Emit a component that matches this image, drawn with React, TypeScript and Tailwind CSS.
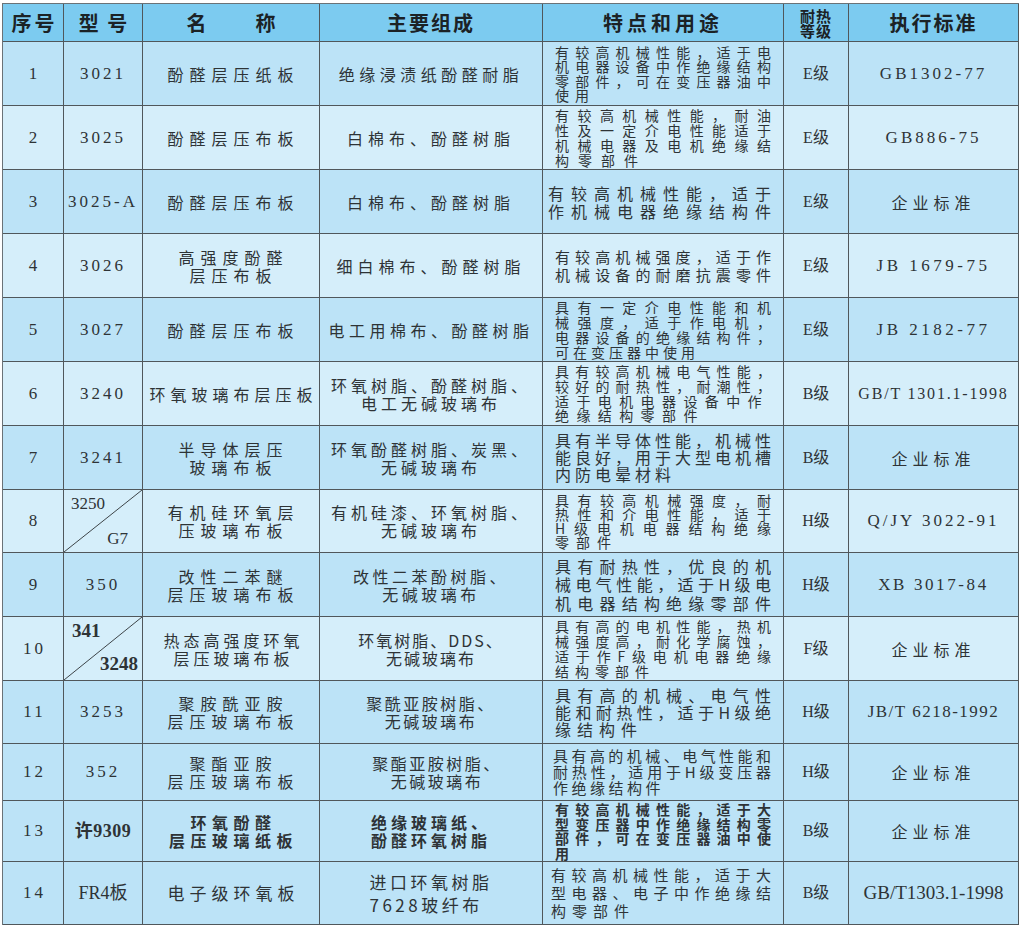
import type { ReactNode } from "react";

const GRID = "grid grid-cols-[61px_79px_177px_223px_241px_65px_170px]";
const EDGE = "border-r border-b border-[#50575b]";
const SERIF = "font-['Liberation_Serif','Noto_Sans_CJK_SC',serif]";
const DARK = "bg-[#bce3f7]";
const LIGHT = "bg-[#d5eefa]";

type Row = {
  no: string;
  h: string;
  bg: string;
  model: string | { a: string; b: string; bold?: boolean };
  modelCls?: string;
  name: string[];
  nameCls?: string;
  comp: string[];
  compCls?: string;
  feat: string[];
  full: number; // first n lines are justified to the cell width
  featCls: string;
  restCls?: string;
  grade: string;
  std: string;
  stdCls: string;
};

const ROWS: Row[] = [
  {
    no: "1", h: "h-[64px]", bg: DARK, model: "3021",
    name: ["酚醛层压纸板"], comp: ["绝缘浸渍纸酚醛耐脂"], compCls: "tracking-[4.5px]",
    feat: ["有较高机械性能，适于电", "机电器设备中作绝缘结构", "零部件，可在变压器油中", "使用"],
    full: 3, featCls: "text-[14px] leading-[14.5px]", restCls: "tracking-[6px]",
    grade: "E级", std: "GB1302-77", stdCls: `${SERIF} text-[17px] tracking-[3px]`,
  },
  {
    no: "2", h: "h-[64px]", bg: LIGHT, model: "3025",
    name: ["酚醛层压布板"], comp: ["白棉布、酚醛树脂"],
    feat: ["有较高机械性能，耐油", "性及一定介电性能适于", "机械电器及电机绝缘结", "构零部件"],
    full: 3, featCls: "text-[14px] leading-[15px]", restCls: "tracking-[9px]",
    grade: "E级", std: "GB886-75", stdCls: `${SERIF} text-[17px] tracking-[3px]`,
  },
  {
    no: "3", h: "h-[64px]", bg: DARK, model: "3025-A",
    name: ["酚醛层压布板"], comp: ["白棉布、酚醛树脂"],
    feat: ["有较高机械性能，适于", "作机械电器绝缘结构件"],
    full: 2, featCls: "text-[16px] leading-[18px] pl-[5px]",
    grade: "E级", std: "企业标准", stdCls: "text-[16px] tracking-[5px]",
  },
  {
    no: "4", h: "h-[64px]", bg: LIGHT, model: "3026",
    name: ["高强度酚醛", "层压布板"], comp: ["细白棉布、酚醛树脂"],
    feat: ["有较高机械强度，适于作", "机械设备的耐磨抗震零件"],
    full: 2, featCls: "text-[15px] leading-[18px]",
    grade: "E级", std: "JB 1679-75", stdCls: `${SERIF} text-[17px] tracking-[3.5px]`,
  },
  {
    no: "5", h: "h-[64px]", bg: DARK, model: "3027",
    name: ["酚醛层压布板"], comp: ["电工用棉布、酚醛树脂"], compCls: "tracking-[4.5px]",
    feat: ["具有一定介电性能和机", "械强度，适于作电机，", "电器设备的绝缘结构件，", "可在变压器中使用"],
    full: 3, featCls: "text-[14px] leading-[15px]", restCls: "tracking-[4px]",
    grade: "E级", std: "JB 2182-77", stdCls: `${SERIF} text-[17px] tracking-[3.5px]`,
  },
  {
    no: "6", h: "h-[64px]", bg: LIGHT, model: "3240",
    name: ["环氧玻璃布层压板"], nameCls: "tracking-[5px]",
    comp: ["环氧树脂、酚醛树脂、", "电工无碱玻璃布"], compCls: "tracking-[4px]",
    feat: ["具有较高机械电气性能，", "较好的耐热性，耐潮性，", "适于电机电器设备中作", "绝缘结构零部件"],
    full: 2, featCls: "text-[14px] leading-[14.7px]", restCls: "tracking-[7.4px]",
    grade: "B级", std: "GB/T 1301.1-1998", stdCls: `${SERIF} text-[16px] tracking-[1.8px]`,
  },
  {
    no: "7", h: "h-[64px]", bg: DARK, model: "3241",
    name: ["半导体层压", "玻璃布板"], comp: ["环氧酚醛树脂、炭黑、", "无碱玻璃布"], compCls: "tracking-[4px]",
    feat: ["具有半导体性能，机械性", "能良好，用于大型电机槽", "内防电晕材料"],
    full: 2, featCls: "text-[16px] leading-[17px]", restCls: "tracking-[4px]",
    grade: "B级", std: "企业标准", stdCls: "text-[16px] tracking-[5px]",
  },
  {
    no: "8", h: "h-[63px]", bg: LIGHT, model: { a: "3250", b: "G7" },
    name: ["有机硅环氧层", "压玻璃布板"], comp: ["有机硅漆、环氧树脂、", "无碱玻璃布"], compCls: "tracking-[4px]",
    feat: ["具有较高机械强度，耐", "热性和介电性能，适于", "H级电机电器结构绝缘", "零部件"],
    full: 3, featCls: "text-[14px] leading-[14px]", restCls: "tracking-[7px]",
    grade: "H级", std: "Q/JY 3022-91", stdCls: `${SERIF} text-[17px] tracking-[3px]`,
  },
  {
    no: "9", h: "h-[64px]", bg: DARK, model: "350",
    name: ["改性二苯醚", "层压玻璃布板"], comp: ["改性二苯酚树脂、", "无碱玻璃布"], compCls: "tracking-[3.5px]",
    feat: ["具有耐热性，优良的机", "械电气性能，适于H级电", "机电器结构绝缘零部件"],
    full: 3, featCls: "text-[16px] leading-[18.5px]",
    grade: "H级", std: "XB 3017-84", stdCls: `${SERIF} text-[17px] tracking-[2.6px]`,
  },
  {
    no: "10", h: "h-[64px]", bg: LIGHT, model: { a: "341", b: "3248", bold: true },
    name: ["热态高强度环氧", "层压玻璃布板"], nameCls: "tracking-[4px]",
    comp: ["环氧树脂、DDS、", "无碱玻璃布"], compCls: "text-[15px] tracking-[2px]",
    feat: ["具有高的电机性能，热机", "械强度高，耐化学腐蚀，", "适于作F级电机电器绝缘", "结构零部件"],
    full: 3, featCls: "text-[14px] leading-[15px]", restCls: "tracking-[6px]",
    grade: "F级", std: "企业标准", stdCls: "text-[16px] tracking-[5px]",
  },
  {
    no: "11", h: "h-[63px]", bg: DARK, model: "3253",
    name: ["聚胺酰亚胺", "层压玻璃布板"], comp: ["聚酰亚胺树脂、", "无碱玻璃布"], compCls: "text-[15px] tracking-[2.5px]",
    feat: ["具有高的机械、电气性", "能和耐热性，适于H级绝", "缘结构件"],
    full: 2, featCls: "text-[16px] leading-[17px]", restCls: "tracking-[6px]",
    grade: "H级", std: "JB/T 6218-1992", stdCls: `${SERIF} text-[17px] tracking-[1.5px]`,
  },
  {
    no: "12", h: "h-[57px]", bg: DARK, model: "352",
    name: ["聚酯亚胺", "层压玻璃布板"], comp: ["聚酯亚胺树脂、", "无碱玻璃布"], compCls: "text-[15px] tracking-[2.5px] pl-[12px]",
    feat: ["具有高的机械、电气性能和", "耐热性，适用于H级变压器", "作绝缘结构件"],
    full: 2, featCls: "text-[15px] leading-[16px] pl-[10px]", restCls: "tracking-[3.5px]",
    grade: "H级", std: "企业标准", stdCls: "text-[16px] tracking-[5px]",
  },
  {
    no: "13", h: "h-[61px]", bg: DARK, model: "许9309", modelCls: "font-bold text-[18px] tracking-[0.5px]",
    name: ["环氧酚醛", "层压玻璃纸板"], nameCls: "font-semibold tracking-[5.5px]",
    comp: ["绝缘玻璃纸、", "酚醛环氧树脂"], compCls: "font-semibold tracking-[4px]",
    feat: ["有较高机械性能，适于大", "型变压器中作绝缘结构零", "部件，可在变压器油中使", "用"],
    full: 3, featCls: "text-[14px] leading-[14.5px] font-semibold",
    grade: "B级", std: "企业标准", stdCls: "text-[16px] tracking-[5px]",
  },
  {
    no: "14", h: "h-[63px]", bg: DARK, model: "FR4板", modelCls: "text-[18px]",
    name: ["电子级环氧板"], nameCls: "tracking-[5px] text-[17px]",
    comp: ["进口环氧树脂", "7628玻纤布"], compCls: "text-[17px] leading-[23px] tracking-[3.5px] text-left",
    feat: ["有较高机械性能，适于大", "型电器、电子中作绝缘结", "构零部件"],
    full: 2, featCls: "text-[15px] leading-[18px] pl-[8px]", restCls: "tracking-[6px]",
    grade: "B级", std: "GB/T1303.1-1998", stdCls: `${SERIF} text-[19px]`,
  },
];

function Cell({ className, children }: { className?: string; children?: ReactNode }) {
  return (
    <div className={`${EDGE} flex items-center justify-center text-center ${className ?? ""}`}>
      {children}
    </div>
  );
}

function Model({ row }: { row: Row }) {
  if (typeof row.model === "string") {
    return (
      <Cell className={`${SERIF} ${row.modelCls ?? "text-[17px] tracking-[3px]"}`}>
        {row.model}
      </Cell>
    );
  }
  const { a, b, bold } = row.model;
  return (
    <div className={`${EDGE} relative flex flex-col justify-between ${SERIF} ${bold ? "font-bold text-[19px] pt-[4px] pb-[6px] pl-[8px] pr-[4px]" : "text-[17px] pt-[4px] pb-[3px] pl-[7px] pr-[14px]"}`}>
      {/* diagonal split, bottom-left to top-right */}
      <svg className="absolute inset-0 h-full w-full" preserveAspectRatio="none" viewBox="0 0 100 100">
        <line x1="0" y1="100" x2="100" y2="0" stroke="#3d4448" strokeWidth="1" vectorEffect="non-scaling-stroke" />
      </svg>
      <span className="self-start leading-[20px]">{a}</span>
      <span className="self-end leading-[20px]">{b}</span>
    </div>
  );
}

function TableRow({ row }: { row: Row }) {
  return (
    <div className={`${GRID} ${row.h} ${row.bg}`}>
      <Cell className={`${SERIF} text-[17px] tracking-[3px] pl-[3px]`}>{row.no}</Cell>
      <Model row={row} />
      <Cell className={`flex-col text-[16px] leading-[18px] pl-[5px] ${row.nameCls ?? "tracking-[6px]"}`}>
        {row.name.map((l) => (
          <div key={l}>{l}</div>
        ))}
      </Cell>
      <Cell>
        <div className={`text-[16px] leading-[18px] ${row.compCls ?? "tracking-[5px]"}`}>
          {row.comp.map((l) => (
            <div key={l}>{l}</div>
          ))}
        </div>
      </Cell>
      <div className={`${EDGE} flex flex-col justify-center px-3 text-left ${row.featCls}`}>
        {row.feat.map((l, i) => (
          <div
            key={l}
            className={`whitespace-nowrap ${i < row.full ? "text-justify [text-align-last:justify]" : row.restCls ?? ""}`}
          >
            {l}
          </div>
        ))}
      </div>
      <Cell className={`${SERIF} text-[16px]`}>{row.grade}</Cell>
      <Cell className={row.stdCls}>{row.std}</Cell>
    </div>
  );
}

export default function App() {
  return (
    <div className="h-[927px] w-[1022px] bg-white pl-[2px] pt-[3px] text-[#2e3336] font-['Noto_Sans_CJK_SC',sans-serif]">
      <div className="w-[1017px] border-l border-t border-[#6a7277]">
        {/* Header */}
        <div className={`${GRID} h-[38px] bg-[#7ccbf0] font-bold text-[20px] text-[#1b2226]`}>
          <Cell className="tracking-[3px] pl-[3px]">序号</Cell>
          <Cell className="tracking-[2px] pl-[2px]">型 号</Cell>
          <Cell className="tracking-[3px] pl-[3px]">名　　称</Cell>
          <Cell className="tracking-[2px]">主要组成</Cell>
          <Cell className="tracking-[4px]">特点和用途</Cell>
          <Cell className="flex-col text-[15px] leading-[15px] tracking-[1px]">
            <div>耐热</div>
            <div>等级</div>
          </Cell>
          <Cell className="tracking-[2px]">执行标准</Cell>
        </div>

        {ROWS.map((row) => (
          <TableRow key={row.no} row={row} />
        ))}
      </div>
    </div>
  );
}
